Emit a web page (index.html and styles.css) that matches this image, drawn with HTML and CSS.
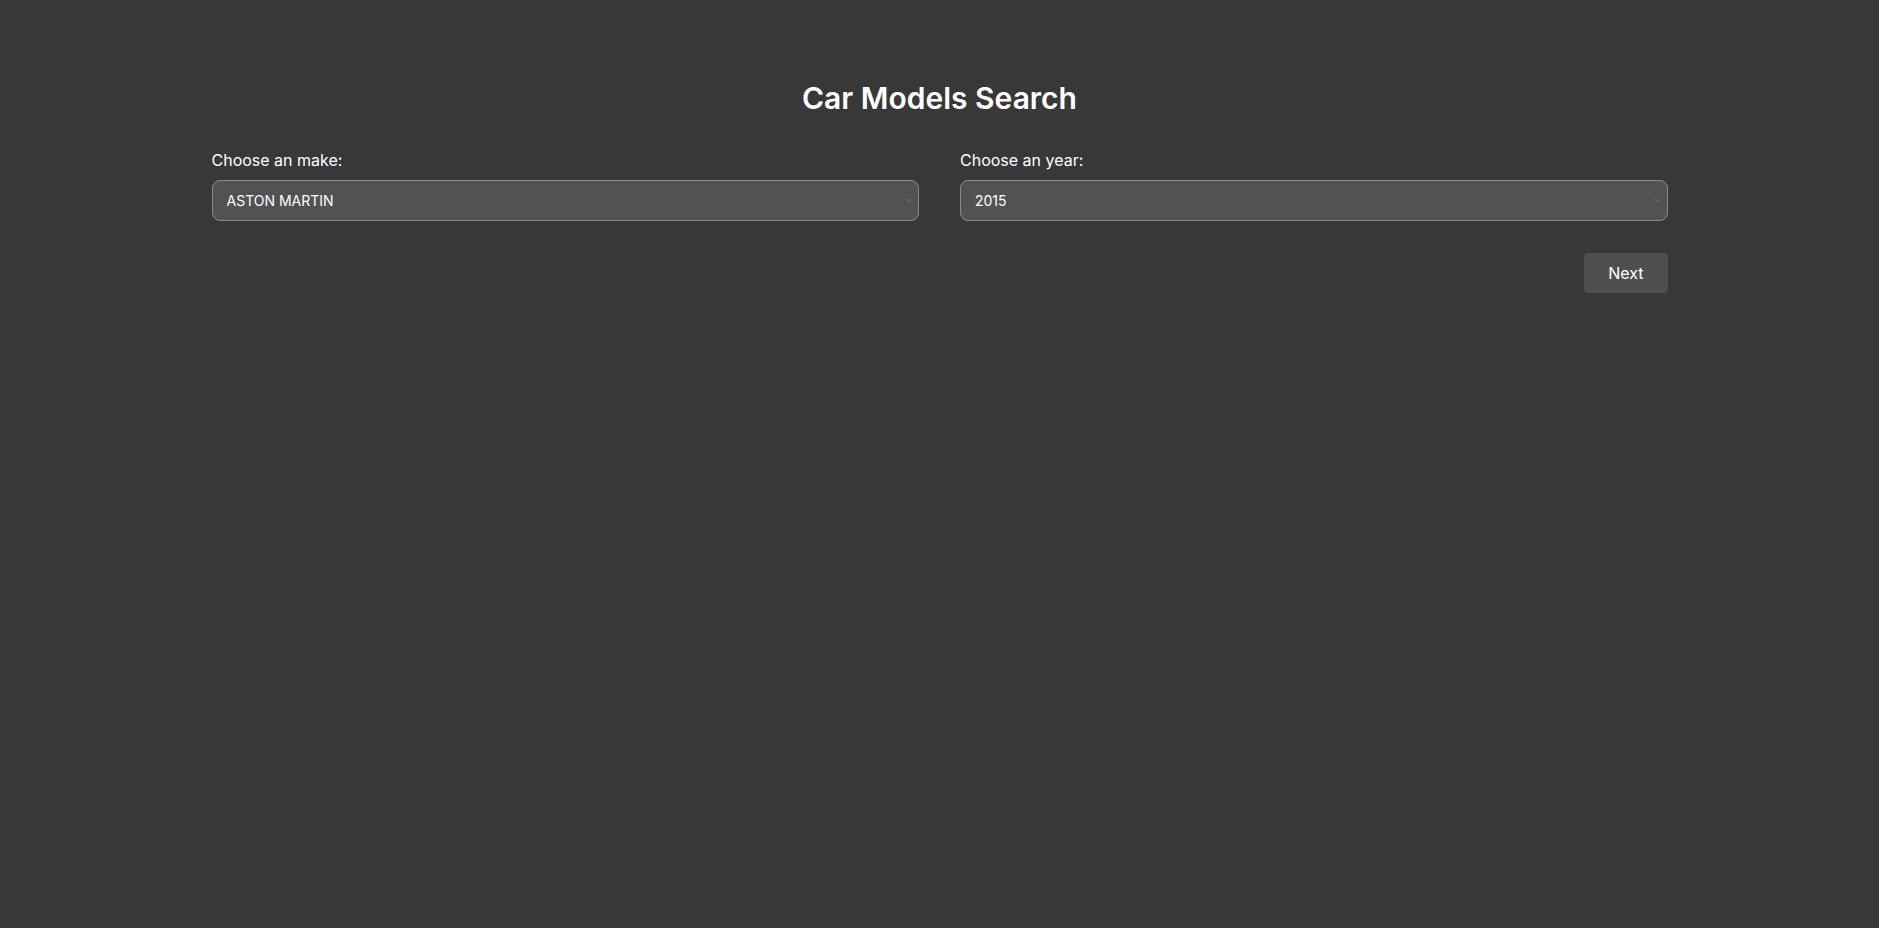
FILE: index.html
```html
<!DOCTYPE html>
<html lang="en">
<head>
<meta charset="utf-8">
<title>Car Models Search</title>
<link rel="stylesheet" href="styles.css">
</head>
<body>
<main class="page">
  <h1 class="title">Car Models Search</h1>
  <form class="search-form">
    <div class="fields">
      <div class="field">
        <label class="field-label" for="make">Choose an make:</label>
        <div class="select-wrap">
          <select id="make" class="select">
            <option>ASTON MARTIN</option>
          </select>
          <svg class="chevron" width="8" height="5" viewBox="0 0 8 5" aria-hidden="true"><path d="M0.5 0.5 L4 4 L7.5 0.5" fill="none" stroke="#6f6f6f" stroke-width="1"/></svg>
        </div>
      </div>
      <div class="field">
        <label class="field-label" for="year">Choose an year:</label>
        <div class="select-wrap">
          <select id="year" class="select">
            <option>2015</option>
          </select>
          <svg class="chevron" width="8" height="5" viewBox="0 0 8 5" aria-hidden="true"><path d="M0.5 0.5 L4 4 L7.5 0.5" fill="none" stroke="#6f6f6f" stroke-width="1"/></svg>
        </div>
      </div>
    </div>
    <div class="actions">
      <button type="button" class="btn">Next</button>
    </div>
  </form>
</main>
</body>
</html>
```
FILE: styles.css
```css
html, body {
  margin: 0;
  padding: 0;
}
body {
  background: #383838;
  color: #ffffff;
  font-family: Inter, "Noto Sans", "Liberation Sans", sans-serif;
  min-height: 100vh;
}
.page {
  width: 1456px;
  margin: 0 auto;
  padding-top: 80px;
}
.title {
  margin: 0 0 34px;
  font-size: 30px;
  font-weight: 600;
  line-height: normal;
  text-align: center;
}
.fields {
  display: grid;
  grid-template-columns: 1fr 1fr;
  column-gap: 41px;
}
.field {
  display: flex;
  flex-direction: column;
}
.field-label {
  font-size: 16px;
  line-height: normal;
  margin-bottom: 10px;
}
.select-wrap {
  position: relative;
}
.select {
  appearance: none;
  -webkit-appearance: none;
  width: 100%;
  box-sizing: border-box;
  height: 41px;
  padding: 0 24px 0 14px;
  background: #525252;
  color: #ffffff;
  border: 1px solid #8c8c8c;
  border-radius: 8px;
  font-family: Inter, "Noto Sans", "Liberation Sans", sans-serif;
  font-size: 14px;
  outline: none;
}
.chevron {
  position: absolute;
  right: 6px;
  top: 18px;
  pointer-events: none;
}
.actions {
  display: flex;
  justify-content: flex-end;
  margin-top: 32px;
}
.btn {
  background: #4f4f4f;
  color: #ffffff;
  border: none;
  border-radius: 4px;
  padding: 10px 24px;
  font-family: Inter, "Noto Sans", "Liberation Sans", sans-serif;
  font-size: 16px;
  line-height: 20px;
  cursor: pointer;
}
```
